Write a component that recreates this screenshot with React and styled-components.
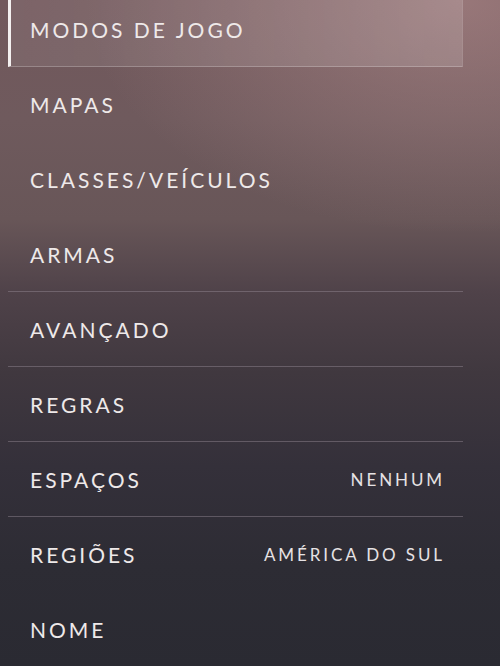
import React from "react";
import styled, { createGlobalStyle } from "styled-components";

const Global = createGlobalStyle`
  html, body { margin: 0; padding: 0; }
  body {
    width: 500px;
    height: 666px;
    overflow: hidden;
    background: #2b2b33;
  }
`;

const Screen = styled.div`
  width: 500px;
  height: 666px;
  overflow: hidden;
  box-sizing: border-box;
  padding: 0 37px 0 8px;
  background:
    radial-gradient(ellipse 75% 35% at 92% 0%, rgba(190, 150, 150, 0.5), rgba(190, 150, 150, 0) 100%),
    linear-gradient(180deg, #72585c 0%, #6f5a5d 18%, #685658 33%, #4f4249 44%, #40383f 56%, #34303a 70%, #2d2c34 85%, #2a2a32 100%);
  font-family: "Lato", "Liberation Sans", sans-serif;
`;

const List = styled.ul`
  list-style: none;
  margin: -8px 0 0;
  padding: 0;
`;

const Row = styled.li`
  box-sizing: border-box;
  height: 75px;
  display: flex;
  align-items: center;
  justify-content: space-between;
  padding: 0 18px 0 22px;
  border-bottom: 1px solid ${(p) => (p.$divider ? "rgba(150, 140, 150, 0.45)" : "transparent")};
  ${(p) =>
    p.$active &&
    `
    background: linear-gradient(90deg, rgba(255,255,255,0.07), rgba(255,255,255,0.14));
    border-left: 3px solid #f4f0f0;
    border-right: 1px solid rgba(255,255,255,0.14);
    border-bottom: 1px solid rgba(255,255,255,0.22);
    padding-left: 19px;
  `}
`;

const Label = styled.span`
  color: #eee9e9;
  font-size: 21px;
  letter-spacing: 3px;
  text-transform: uppercase;
`;

const Value = styled.span`
  color: #e6e2e4;
  font-size: 17px;
  letter-spacing: 2.9px;
  text-transform: uppercase;
`;

const items = [
  { label: "Modos de jogo", active: true },
  { label: "Mapas" },
  { label: "Classes/Veículos" },
  { label: "Armas", divider: true },
  { label: "Avançado", divider: true },
  { label: "Regras", divider: true },
  { label: "Espaços", value: "Nenhum", divider: true },
  { label: "Regiões", value: "América do Sul" },
  { label: "Nome" },
];

export default function App() {
  return (
    <>
      <Global />
      <Screen>
        <List>
          {items.map((it) => (
            <Row key={it.label} $active={it.active} $divider={it.divider}>
              <Label>{it.label}</Label>
              {it.value && <Value>{it.value}</Value>}
            </Row>
          ))}
        </List>
      </Screen>
    </>
  );
}
